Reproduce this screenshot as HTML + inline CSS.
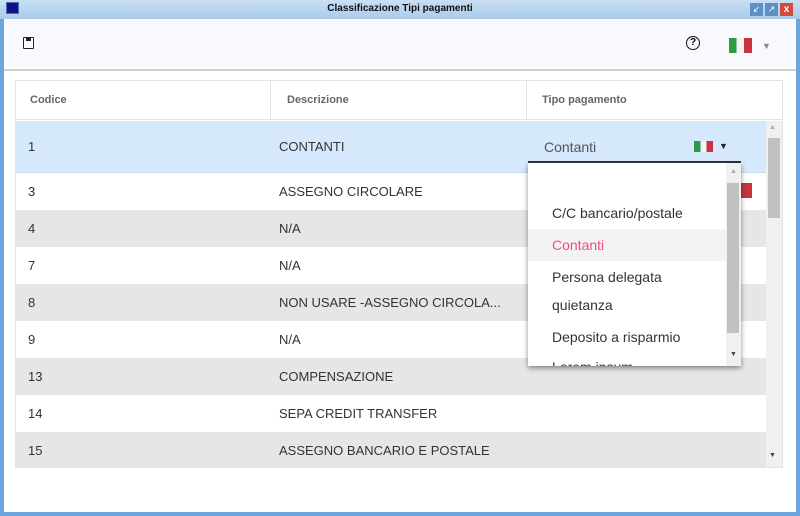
<!DOCTYPE html>
<html><head><style>
*{margin:0;padding:0;box-sizing:border-box}
body{width:800px;height:516px;overflow:hidden;background:#fff;font-family:"Liberation Sans",sans-serif;position:relative}
.a{position:absolute}
.t{position:absolute;font-size:13px;color:#333;white-space:nowrap}
.h{position:absolute;font-size:11px;color:#666;font-weight:bold}
.r{position:absolute;left:16px;width:750px}
.g{background:#e6e6e6}
.w{background:#fff}
.d{position:absolute;left:552px;font-size:13px;color:#333}
</style></head><body>
<!-- window frame -->
<div class="a" style="left:0;top:0;width:800px;height:516px;background:#6aa6dc"></div>
<div class="a" style="left:0;top:0;width:800px;height:19px;background:linear-gradient(#c9dff3,#a9cbec)"></div>
<div class="a" style="left:4px;top:19px;width:792px;height:493px;background:#fff"></div>
<div class="a" style="left:6px;top:2px;width:13px;height:12px;background:#10108a;border:1px solid #4a6cb0"></div>
<div class="a" style="left:0;top:3px;width:800px;text-align:center;font-size:10px;font-weight:bold;color:#111">Classificazione Tipi pagamenti</div>
<div class="a" style="left:750px;top:3px;width:13px;height:13px;background:#5f8fc4;color:#fff;font-size:9px;text-align:center;line-height:13px">↙</div>
<div class="a" style="left:765px;top:3px;width:13px;height:13px;background:#5f8fc4;color:#fff;font-size:9px;text-align:center;line-height:13px">↗</div>
<div class="a" style="left:780px;top:3px;width:13px;height:13px;background:#d04a3e;color:#fff;font-size:10px;font-weight:bold;text-align:center;line-height:13px">x</div>
<!-- toolbar -->
<div class="a" style="left:4px;top:19px;width:792px;height:51px;background:#f8f9fd"></div>
<div class="a" style="left:4px;top:69px;width:792px;height:2px;background:#cfcfcf"></div>
<div class="a" style="left:23px;top:37px;width:11px;height:12px;border:1.5px solid #222;border-radius:1px;background:#fff"></div>
<div class="a" style="left:26px;top:37px;width:5px;height:4px;background:#222"></div>
<div class="a" style="left:686px;top:36px;width:14px;height:14px;border:1.5px solid #111;border-radius:50%;font-size:10px;font-weight:bold;text-align:center;line-height:11px">?</div>
<div class="a" style="left:729px;top:38px;width:23px;height:15px;background:linear-gradient(90deg,#2e9a45 33%,#f3f3f3 33%,#f3f3f3 66%,#c9343c 66%)"></div>
<div class="a" style="left:762px;top:41px;font-size:9px;color:#888">▼</div>
<!-- table -->
<div class="a" style="left:15px;top:80px;width:768px;height:388px;border:1px solid #e3e3e3"></div>
<div class="a" style="left:16px;top:81px;width:766px;height:39px;background:#fff;border-bottom:1px solid #e3e3e3"></div>
<div class="a" style="left:270px;top:81px;width:1px;height:39px;background:#e3e3e3"></div>
<div class="a" style="left:526px;top:81px;width:1px;height:39px;background:#e3e3e3"></div>
<div class="h" style="left:30px;top:94px">Codice</div>
<div class="h" style="left:287px;top:94px">Descrizione</div>
<div class="h" style="left:542px;top:94px">Tipo pagamento</div>
<div class="r" style="top:121px;height:52px;background:#d6e8fb;border-bottom:1px solid #c8daf0"></div>
<div class="r w" style="top:174px;height:36px"></div>
<div class="r g" style="top:210px;height:37px"></div>
<div class="r w" style="top:247px;height:37px"></div>
<div class="r g" style="top:284px;height:37px"></div>
<div class="r w" style="top:321px;height:37px"></div>
<div class="r g" style="top:358px;height:37px"></div>
<div class="r w" style="top:395px;height:37px"></div>
<div class="r g" style="top:432px;height:35px"></div>
<div class="t" style="left:28px;top:139px">1</div><div class="t" style="left:279px;top:139px">CONTANTI</div>
<div class="t" style="left:28px;top:184px">3</div><div class="t" style="left:279px;top:184px">ASSEGNO CIRCOLARE</div>
<div class="t" style="left:28px;top:221px">4</div><div class="t" style="left:279px;top:221px">N/A</div>
<div class="t" style="left:28px;top:258px">7</div><div class="t" style="left:279px;top:258px">N/A</div>
<div class="t" style="left:28px;top:295px">8</div><div class="t" style="left:279px;top:295px">NON USARE -ASSEGNO CIRCOLA...</div>
<div class="t" style="left:28px;top:332px">9</div><div class="t" style="left:279px;top:332px">N/A</div>
<div class="t" style="left:28px;top:369px">13</div><div class="t" style="left:279px;top:369px">COMPENSAZIONE</div>
<div class="t" style="left:28px;top:406px">14</div><div class="t" style="left:279px;top:406px">SEPA CREDIT TRANSFER</div>
<div class="t" style="left:28px;top:443px">15</div><div class="t" style="left:279px;top:443px">ASSEGNO BANCARIO E POSTALE</div>
<div class="a" style="left:741px;top:183px;width:11px;height:15px;background:#c9343c"></div>
<!-- table scrollbar -->
<div class="a" style="left:766px;top:121px;width:16px;height:346px;background:#f0f0f0"></div>
<div class="a" style="left:768px;top:138px;width:12px;height:80px;background:#c1c1c1"></div>
<div class="a" style="left:769px;top:124px;font-size:7px;color:#aaa">▲</div>
<div class="a" style="left:769px;top:452px;font-size:7px;color:#444">▼</div>
<!-- combo in row 1 -->
<div class="t" style="left:544px;top:139px;color:#555;font-size:14px">Contanti</div>
<div class="a" style="left:694px;top:141px;width:19px;height:11px;background:linear-gradient(90deg,#2e9a45 33%,#f3f3f3 33%,#f3f3f3 66%,#c9343c 66%)"></div>
<div class="a" style="left:719px;top:141px;font-size:9px;color:#222">▼</div>
<div class="a" style="left:528px;top:161px;width:213px;height:2px;background:#333"></div>
<!-- dropdown -->
<div class="a" style="left:528px;top:163px;width:213px;height:203px;background:#fff;box-shadow:0 2px 5px rgba(0,0,0,.45);overflow:hidden">
<div class="a" style="left:0;top:66px;width:198px;height:32px;background:#f3f3f3"></div>
<div class="a" style="left:198px;top:0;width:15px;height:203px;background:#f0f0f0"></div>
<div class="a" style="left:199px;top:20px;width:12px;height:150px;background:#c1c1c1"></div>
<div class="a" style="left:202px;top:5px;font-size:7px;color:#aaa">▲</div>
<div class="a" style="left:202px;top:188px;font-size:7px;color:#444">▼</div>
<div class="d" style="left:24px;top:42px;font-size:14px">C/C bancario/postale</div>
<div class="d" style="left:24px;top:74px;font-size:14px;color:#f0507a">Contanti</div>
<div class="d" style="left:24px;top:106px;font-size:14px">Persona delegata</div>
<div class="d" style="left:24px;top:134px;font-size:14px">quietanza</div>
<div class="d" style="left:24px;top:166px;font-size:14px">Deposito a risparmio</div>
<div class="d" style="left:24px;top:196px;font-size:14px">Lorem ipsum</div>
</div>
</body></html>
